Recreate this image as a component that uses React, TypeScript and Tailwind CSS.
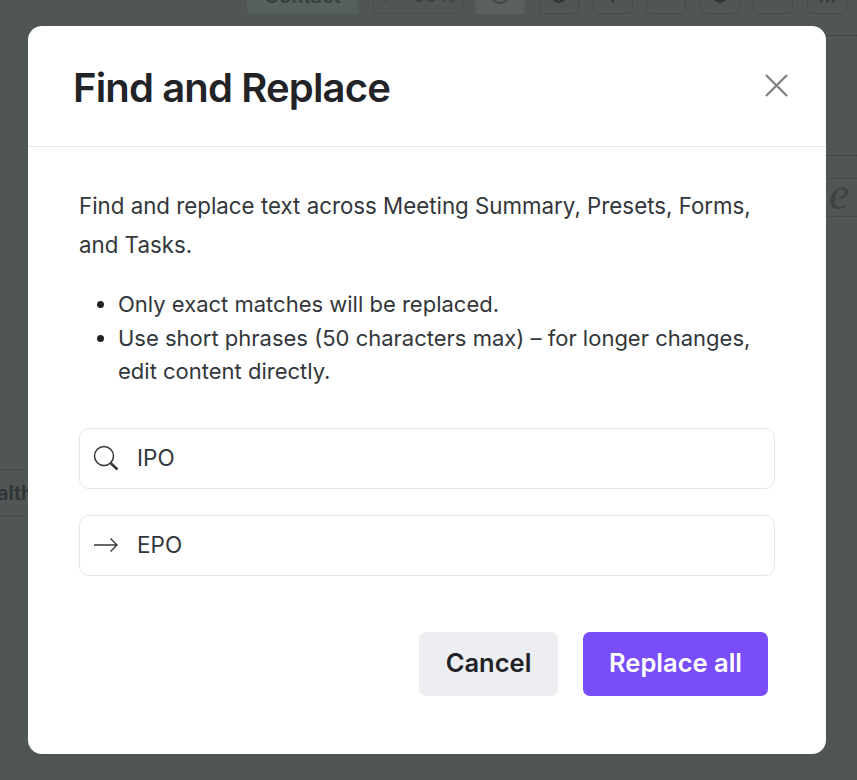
import { Circle, Gauge, Pin, Shield, Square, Waves } from 'lucide-react';

const font = { fontFamily: 'Inter, sans-serif' };

function ToolButton({ children }: { children?: React.ReactNode }) {
  return (
    <div className="flex h-[14px] w-[40px] items-end justify-center overflow-hidden rounded-b-[5px] border border-t-0 border-[#474c4b] pb-[9px] text-[#313535]">
      {children}
    </div>
  );
}

function Field({ icon, value }: { icon: React.ReactNode; value: string }) {
  return (
    <div className="flex h-[61px] w-[696px] items-center rounded-[10px] border border-[#e6e7ea] pl-[13px]">
      <div className="flex w-[44px] shrink-0 items-center">{icon}</div>
      <span className="text-[22.5px] text-[#33363a]">{value}</span>
    </div>
  );
}

export default function App() {
  return (
    <div style={font} className="relative h-[780px] w-[857px] overflow-hidden bg-[#505555]">
      {/* page behind the dialog */}
      <div className="flex h-[14px] items-start overflow-hidden pl-[247px] text-[#3a3e3e]">
        <div className="flex h-[14px] w-[111px] items-end justify-center overflow-hidden rounded-b-[4px] bg-[#55605d] pb-[6px] text-[20px] font-semibold leading-[24px]">
          <span className="shrink-0">Contact</span>
        </div>
        <div className="ml-[15px] flex h-[14px] w-[91px] items-end justify-center gap-[20px] overflow-hidden rounded-b-[4px] border border-t-0 border-[#4a4f4e] pb-[6px] text-[20px] leading-[24px]">
          <span className="shrink-0">+</span>
          <span className="shrink-0">90%</span>
        </div>
        <div className="ml-[11px] flex h-[14px] w-[50px] items-end justify-center overflow-hidden rounded-b-[4px] bg-[#5a5f5f] pb-[9px]">
          <Circle className="h-[22px] w-[22px] shrink-0" strokeWidth={1.6} />
        </div>
        <div className="ml-[14px] flex gap-[13.5px]">
          <ToolButton><Shield className="h-[24px] w-[24px] shrink-0" strokeWidth={2.4} /></ToolButton>
          <ToolButton><Pin className="h-[24px] w-[24px] shrink-0" strokeWidth={2.4} /></ToolButton>
          <ToolButton><Gauge className="h-[24px] w-[24px] shrink-0" strokeWidth={1.6} /></ToolButton>
          <ToolButton><Shield className="h-[24px] w-[24px] shrink-0" fill="currentColor" /></ToolButton>
          <ToolButton><Square className="h-[24px] w-[24px] shrink-0 opacity-0" /></ToolButton>
          <ToolButton><Waves className="h-[24px] w-[24px] shrink-0 rotate-90" strokeWidth={1.6} /></ToolButton>
        </div>
      </div>
      <div className="absolute left-[826px] top-[35px] h-0 w-[31px] border-t border-dashed border-[#3c4140]" />
      <div className="absolute left-[826px] top-[155px] h-0 w-[31px] border-t border-dashed border-[#3c4140]" />
      <div className="absolute left-[826px] top-[178px] flex h-[39px] w-[31px] items-center border-y border-[#474c4b] pl-[3px]">
        <span className="mt-[-8px] text-[46px] italic leading-[36px] text-[#3f4443]" style={{ fontFamily: '"Liberation Serif", serif' }}>e</span>
      </div>
      <div className="absolute left-0 top-[469px] flex h-[47px] w-[60px] items-center overflow-hidden border-y border-[#474c4b] text-[20px] font-semibold text-[#2f3333]">
        <span className="ml-[-3px]">alth</span>
      </div>

      {/* dialog */}
      <div className="absolute left-[28px] top-[26px] flex h-[728px] w-[798px] flex-col rounded-[14px] bg-white">
        <div className="flex h-[121px] shrink-0 items-center justify-between border-b border-[#e8e9eb] pl-[45px] pr-[38px]">
          <h1 className="mt-[4px] text-[40px] font-semibold tracking-[-0.85px] text-[#212327]">Find and Replace</h1>
          <svg viewBox="0 0 24 24" className="mt-[-1px] h-[23px] w-[23px] text-[#808285]" fill="none" stroke="currentColor" strokeWidth="2.4">
            <path d="M1 1 L23 23 M23 1 L1 23" />
          </svg>
        </div>
        <div className="flex flex-col pl-[51px] pt-[39px] text-[#33363a]">
          <p className="text-[22.3px] leading-[39px]">
            Find and replace text across Meeting Summary, Presets, Forms,
            <br />
            and Tasks.
          </p>
          <ul className="mt-[24px] list-disc pl-[39px] text-[22px] leading-[33.5px] marker:text-[#212327]">
            <li>Only exact matches will be replaced.</li>
            <li>
              Use short phrases (50 characters max) – for longer changes,
              <br />
              edit content directly.
            </li>
          </ul>
          <div className="mt-[39px] flex flex-col gap-[26px]">
            <Field
              icon={
                <svg viewBox="0 0 26 26" className="h-[26px] w-[26px] text-[#33363a]" fill="none" stroke="currentColor">
                  <circle cx="11" cy="11" r="9.5" strokeWidth="1.5" />
                  <path d="M17.5 18 L24.5 24.5" strokeWidth="2.6" />
                </svg>
              }
              value="IPO"
            />
            <Field
              icon={
                <svg viewBox="0 0 26 26" className="h-[26px] w-[26px] text-[#33363a]" fill="none" stroke="currentColor" strokeWidth="1.4">
                  <path d="M1 13 H24 M17.5 6.5 L24 13 L17.5 19.5" />
                </svg>
              }
              value="EPO"
            />
          </div>
          <div className="mt-[56px] flex justify-end gap-[25px] pr-[58px]">
            <button className="h-[64px] w-[139px] rounded-[7px] bg-[#eceef1] text-[25.5px] font-semibold text-[#212327]">Cancel</button>
            <button className="h-[64px] w-[185px] rounded-[7px] bg-[#7a4dfb] text-[25.5px] font-semibold text-white">Replace all</button>
          </div>
        </div>
      </div>
    </div>
  );
}
